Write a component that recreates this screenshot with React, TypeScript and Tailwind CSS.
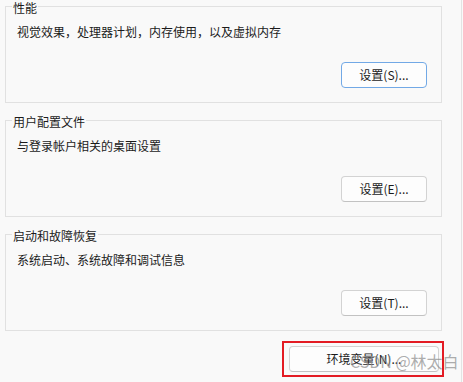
const groups = [
  { title: '性能', desc: '视觉效果，处理器计划，内存使用，以及虚拟内存', btn: '设置(S)...', focused: true },
  { title: '用户配置文件', desc: '与登录帐户相关的桌面设置', btn: '设置(E)...', focused: false },
  { title: '启动和故障恢复', desc: '系统启动、系统故障和调试信息', btn: '设置(T)...', focused: false },
];

const font = { fontFamily: '"Noto Sans CJK SC", "Noto Sans", sans-serif' };

export default function App() {
  return (
    <div
      className="relative flex h-[382px] w-[463px] overflow-hidden bg-[#f9f9f9] text-[12px] leading-[16px] text-[#1b1b1b]"
      style={font}
    >
      <div className="w-[461px] pl-[5px] pt-[6px]">
        <div className="flex w-[437px] flex-col gap-[17px]">
          {groups.map((g, i) => (
            <div key={i} className="relative h-[97px] border border-[#e1e1e1] pl-[11px] pr-[14px] pt-[17px]">
              <span className="absolute left-[6px] top-[-7px] bg-[#f9f9f9] px-[1px]">{g.title}</span>
              <div>{g.desc}</div>
              <div className="mt-[22px] flex justify-end">
                <button
                  className={
                    'h-[26px] w-[86px] rounded-[4px] border bg-[#fdfdfd] text-[12px] ' +
                    (g.focused ? 'border-[#72a9e6]' : 'border-[#d3d3d3] border-b-[#c2c2c2]')
                  }
                >
                  {g.btn}
                </button>
              </div>
            </div>
          ))}
        </div>
        <div className="mt-[10px] flex w-[439px] justify-end">
          <div className="border-2 border-[#e31b23] pb-[3px] pl-[5px] pr-[3px] pt-[3px]">
            <button className="h-[26px] w-[150px] rounded-[4px] border border-[#d3d3d3] border-b-[#c2c2c2] bg-[#fdfdfd] text-[12px]">
              环境变量(N)...
            </button>
          </div>
        </div>
      </div>
      <div className="h-full w-px bg-[#e3e3e3]" />
      <span className="pointer-events-none absolute left-[350px] top-[351px] text-[16px] leading-[21px] text-[#8a8a8a]/70">
        CSDN @林太白
      </span>
    </div>
  );
}
